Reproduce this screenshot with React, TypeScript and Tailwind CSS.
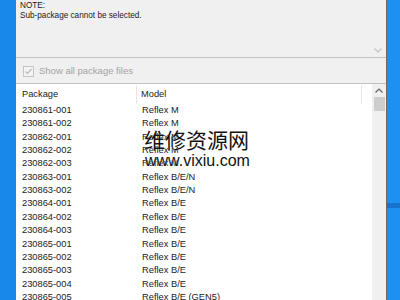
import React from 'react';

const rows: [string, string][] = [
  ['230861-001', 'Reflex M'],
  ['230861-002', 'Reflex M'],
  ['230862-001', 'Reflex M'],
  ['230862-002', 'Reflex M'],
  ['230862-003', 'Reflex M'],
  ['230863-001', 'Reflex B/E/N'],
  ['230863-002', 'Reflex B/E/N'],
  ['230864-001', 'Reflex B/E'],
  ['230864-002', 'Reflex B/E'],
  ['230864-003', 'Reflex B/E'],
  ['230865-001', 'Reflex B/E'],
  ['230865-002', 'Reflex B/E'],
  ['230865-003', 'Reflex B/E'],
  ['230865-004', 'Reflex B/E'],
  ['230865-005', 'Reflex B/E (GEN5)'],
];

const Chevron = ({ up, color }: { up?: boolean; color: string }) => (
  <svg width="8" height="5" viewBox="0 0 8 5">
    <polyline
      points={up ? '0.5,4.5 4,1 7.5,4.5' : '0.5,0.5 4,4 7.5,0.5'}
      fill="none"
      stroke={color}
      strokeWidth="1.2"
    />
  </svg>
);

const App = () => {
  return (
    <div className="relative flex h-[300px] w-[400px] overflow-hidden bg-[#1b8cea] font-['Liberation_Sans',sans-serif]">
      <div className="w-[16px] shrink-0 bg-[#1889e8]" />

      <div className="flex w-[370px] shrink-0 flex-col bg-[#f0f0f0]">
        {/* note box */}
        <div className="relative h-[58px] shrink-0 border-b border-[#c2c2c2] pl-[4px] pt-px text-[8.2px] leading-[10px] text-[#1a1a1a]">
          <div>NOTE:</div>
          <div>Sub-package cannot be selected.</div>
          <div className="absolute bottom-[4px] right-[4px] flex">
            <Chevron color="#c4c4c4" />
          </div>
        </div>

        {/* checkbox row */}
        <div className="flex h-[25px] shrink-0 items-center pl-[7px] pt-[2px]">
          <div className="flex h-[11px] w-[11px] items-center justify-center border border-[#c4c4c4] bg-[#f4f4f4]">
            <svg width="9" height="9" viewBox="0 0 9 9">
              <polyline
                points="1.5,4.5 3.5,6.5 7.5,2"
                fill="none"
                stroke="#b8b8b8"
                strokeWidth="1.2"
              />
            </svg>
          </div>
          <span className="ml-[5px] text-[9.5px] text-[#a3a3a3]">
            Show all package files
          </span>
        </div>

        {/* list */}
        <div className="flex min-h-0 flex-1 border-t border-[#c2c2c2] bg-white">
          <div className="flex w-[356px] flex-col text-[9.3px] text-[#1a1a1a]">
            <div className="flex h-[20px] shrink-0 items-center pt-px">
              <div className="flex h-full w-[121px] items-center border-r border-[#e6e6e6] pl-[6px]">
                Package
              </div>
              <div className="flex h-full w-[225px] items-center border-r border-[#e6e6e6] pl-[4px]">
                Model
              </div>
            </div>
            {rows.map(([pkg, model]) => (
              <div key={pkg} className="flex h-[13.4px] shrink-0 items-center">
                <div className="w-[122px] pl-[6px]">{pkg}</div>
                <div className="pl-[4px]">{model}</div>
              </div>
            ))}
          </div>
          <div className="flex w-[14px] flex-col items-center bg-[#f0f0f0]">
            <div className="flex h-[13px] items-center justify-center">
              <Chevron up color="#606060" />
            </div>
            <div className="h-[14px] w-[11px] bg-[#cdcdcd]" />
          </div>
        </div>
      </div>

      <div className="w-px shrink-0 bg-[#6a6a6a]" />
      <div className="flex w-[13px] shrink-0 flex-col">
        <div className="h-[203px] bg-[#1e90f0]" />
        <div className="h-[5px] bg-[#1672cc]" />
        <div className="flex-1 bg-[#1e90f0]" />
      </div>

      {/* watermark overlay */}
      <div className="absolute left-[144px] top-[129px] font-['Noto_Sans_CJK_SC',sans-serif] text-[21px] leading-[21px] text-[#111] [text-shadow:0_0_1px_#fff]">
        维修资源网
      </div>
      <div className="absolute left-[145px] top-[153px] text-[16px] leading-[16px] text-[#111] [text-shadow:0_0_1px_#fff]">
        www.vixiu.com
      </div>
    </div>
  );
};

export default App;
